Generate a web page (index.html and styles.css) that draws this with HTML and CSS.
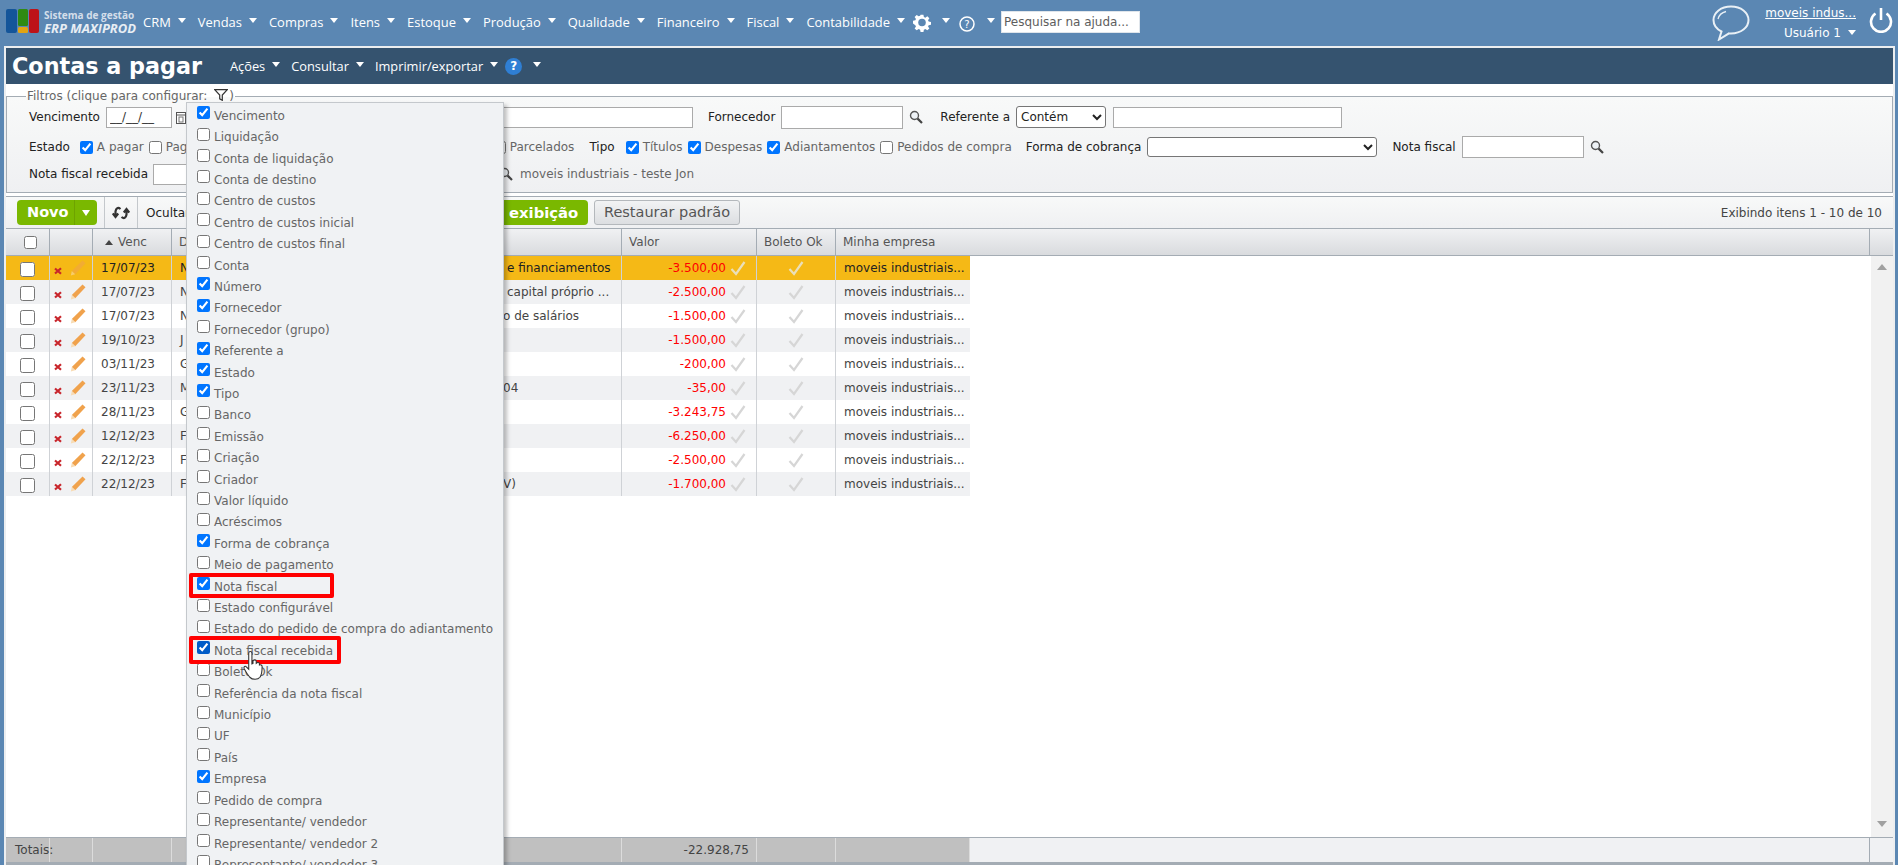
FILE: index.html
```html
<!DOCTYPE html>
<html lang="pt-BR">
<head>
<meta charset="utf-8">
<title>Contas a pagar</title>
<link rel="stylesheet" href="styles.css">
</head>
<body>
<svg class="defs" xmlns="http://www.w3.org/2000/svg">
  <symbol id="i-x" viewBox="0 0 8 8"><path d="M1 1.5 7 6.8M7 1.2 1 6.5" stroke="#c8252b" stroke-width="2.2" fill="none"/></symbol>
  <symbol id="i-pen" viewBox="0 0 16 16"><path d="M12.500 .6 15.500 3.200 5.200 14.200 1.800 11Z" fill="#f0a24c"/><path d="M1.800 11 5.200 14.200 .8 15.600Z" fill="#f8dcb4"/></symbol>
  <symbol id="i-chk" viewBox="0 0 16 16"><path d="M1.500 9 6 14 14.500 2" stroke="currentColor" stroke-width="2.200" fill="none"/></symbol>
  <symbol id="i-mag" viewBox="0 0 14 14"><circle cx="5.500" cy="5.500" r="4" fill="#eef2f6" stroke="#555" stroke-width="1.400"/><path d="M8.600 8.600 13 13" stroke="#444" stroke-width="2.200"/></symbol>
</svg>

<header class="topbar">
  <div class="logo">
    <svg class="logo-mark" viewBox="0 0 34 24" xmlns="http://www.w3.org/2000/svg">
      <rect x="0" y="0" width="11" height="24" rx="2" fill="#14559a"/>
      <rect x="12" y="0" width="10" height="17" rx="1.500" fill="#2f8a12"/>
      <rect x="12" y="18" width="10" height="6" rx="1.500" fill="#e3a412"/>
      <rect x="23" y="0" width="10" height="24" rx="2" fill="#bd1218"/>
    </svg>
    <div class="logo-text">
      <span class="logo-top">Sistema de gestão</span>
      <span class="logo-bottom">ERP MAXIPROD</span>
    </div>
  </div>
  <nav class="mainnav">
    <a class="navitem">CRM<i class="caret"></i></a>
    <a class="navitem">Vendas<i class="caret"></i></a>
    <a class="navitem">Compras<i class="caret"></i></a>
    <a class="navitem">Itens<i class="caret"></i></a>
    <a class="navitem">Estoque<i class="caret"></i></a>
    <a class="navitem">Produção<i class="caret"></i></a>
    <a class="navitem">Qualidade<i class="caret"></i></a>
    <a class="navitem">Financeiro<i class="caret"></i></a>
    <a class="navitem">Fiscal<i class="caret"></i></a>
    <a class="navitem navitem-last">Contabilidade<i class="caret"></i></a>
    <svg class="gear" viewBox="0 0 20 20" xmlns="http://www.w3.org/2000/svg"><path d="M8.400 1h3.200l.5 2.600 1.600.7 2.200-1.500 2.300 2.300-1.500 2.200.7 1.600 2.600.5v3.200l-2.600.5-.7 1.600 1.500 2.200-2.300 2.300-2.200-1.500-1.600.7-.5 2.600H8.400l-.5-2.600-1.600-.7-2.200 1.500-2.300-2.300 1.500-2.200-.7-1.600L0 11.100V7.900l2.600-.5.7-1.600-1.500-2.200 2.300-2.300 2.200 1.500 1.600-.7Z" transform="translate(0 .5) scale(1 .95)" fill="#fff"/><circle cx="10" cy="10" r="4.200" fill="#5b87b3"/></svg>
    <i class="caret caret-gear"></i>
    <svg class="helpi" viewBox="0 0 16 16" xmlns="http://www.w3.org/2000/svg"><circle cx="8" cy="8" r="7" fill="none" stroke="#fff" stroke-width="1.500"/><text x="8" y="11.600" text-anchor="middle" class="helpi-t">?</text></svg>
    <i class="caret caret-help"></i>
    <input class="helpsearch" type="text" placeholder="Pesquisar na ajuda...">
  </nav>
  <div class="userbox">
    <svg class="bubble" viewBox="0 0 38 36" xmlns="http://www.w3.org/2000/svg"><path d="M19 1.500C9 1.500 1.500 7.500 1.500 15c0 5 3 9 8 11.500L7 34.500 17 28.400c1 .1 1.500.1 2 .1 10 0 17.500-6 17.500-13.500S29 1.500 19 1.500Z" fill="none" stroke="#e9f0f6" stroke-width="2"/><path d="M6 14c1-4 4-6.500 8-7.500" fill="none" stroke="#e9f0f6" stroke-width="1.300"/></svg>
    <div class="usertext">
      <a class="company">moveis indus...</a>
      <span class="username">Usuário 1<i class="caret caret-user"></i></span>
    </div>
    <svg class="power" viewBox="0 0 24 26" xmlns="http://www.w3.org/2000/svg"><path d="M6.500 6.500a10 10 0 1 0 11 0" fill="none" stroke="#fff" stroke-width="2.600"/><path d="M12 1v12" stroke="#fff" stroke-width="2.600"/></svg>
  </div>
</header>

<main class="panel">
  <div class="titlebar">
    <h1 class="pagetitle">Contas a pagar</h1>
    <a class="subitem">Ações<i class="caret"></i></a>
    <a class="subitem">Consultar<i class="caret"></i></a>
    <a class="subitem subitem-tight">Imprimir/exportar<i class="caret"></i></a>
    <span class="bluehelp">?</span>
    <i class="caret caret-sub"></i>
  </div>

  <fieldset class="filters">
    <legend class="filters-legend">Filtros (clique para configurar:
      <svg class="funnel" viewBox="0 0 14 12" xmlns="http://www.w3.org/2000/svg"><path d="M.7.7h12.600L8.300 6v5.300L5.700 9.800V6Z" fill="none" stroke="#333" stroke-width="1.200"/></svg>)
    </legend>
    <div class="frow frow1">
      <label class="flabel">Vencimento</label>
      <input class="ftext f-date" type="text" value="__/__/__">
      <svg class="calendar" viewBox="0 0 10 13" xmlns="http://www.w3.org/2000/svg"><rect x=".5" y="1.500" width="9" height="11" fill="#fff" stroke="#555"/><path d="M1 4h8" stroke="#555"/><rect x="3" y="6" width="4" height="5" fill="none" stroke="#777"/></svg>
      <input class="ftext f-num" type="text">
      <label class="flabel f-forn">Fornecedor</label>
      <input class="ftext f-fornin" type="text">
      <svg class="mag"><use href="#i-mag"/></svg>
      <label class="flabel f-ref">Referente a</label>
      <select class="fselect f-cont"><option>Contém</option></select>
      <input class="ftext f-reftxt" type="text">
    </div>
    <div class="frow frow2">
      <label class="flabel">Estado</label>
      <input class="fchk f-c1" type="checkbox" checked><span class="clabel">A pagar</span>
      <input class="fchk f-c2" type="checkbox"><span class="clabel f-pag">Pagos</span>
      <input class="fchk f-c3" type="checkbox"><span class="clabel">Parcelados</span>
      <label class="flabel f-tipo">Tipo</label>
      <input class="fchk f-c4" type="checkbox" checked><span class="clabel">Títulos</span>
      <input class="fchk f-c5" type="checkbox" checked><span class="clabel">Despesas</span>
      <input class="fchk f-c5" type="checkbox" checked><span class="clabel">Adiantamentos</span>
      <input class="fchk f-c5" type="checkbox"><span class="clabel">Pedidos de compra</span>
      <label class="flabel f-forma">Forma de cobrança</label>
      <select class="fselect f-formasel"><option></option></select>
      <label class="flabel f-nf">Nota fiscal</label>
      <input class="ftext f-nfin" type="text">
      <svg class="mag"><use href="#i-mag"/></svg>
    </div>
    <div class="frow frow3">
      <label class="flabel">Nota fiscal recebida</label>
      <input class="ftext f-nfr" type="text">
      <svg class="mag f-mag3"><use href="#i-mag"/></svg>
      <span class="clabel f-emp">moveis industriais - teste Jon</span>
    </div>
  </fieldset>

  <div class="toolbar">
    <div class="btn-novo"><span class="novo-main">Novo</span><span class="novo-arrow"></span></div>
    <span class="tool-sync">
      <svg class="sync" viewBox="0 0 18 16" xmlns="http://www.w3.org/2000/svg"><path d="M8.500 4C6 2 4 3 3.500 6.500V11M.8 8.500 3.500 12 6.200 8.500" fill="none" stroke="#333" stroke-width="2.200"/><path d="M9.500 12c2.500 2 4.500 1 5-2.500V5M11.800 7.500 14.500 4 17.200 7.500" fill="none" stroke="#333" stroke-width="2.200"/></svg>
    </span>
    <span class="tool-hide">Ocultar</span>
    <div class="btn-green">exibição</div>
    <div class="btn-gray">Restaurar padrão</div>
    <span class="pager">Exibindo itens 1 - 10 de 10</span>
  </div>

  <div class="gridhead">
    <table class="gtable gtable-full">
      <colgroup><col class="c1"><col class="c2"><col class="c3"><col class="c4"><col class="c5"><col class="c6"><col class="c7"><col class="c8w"><col class="c10"></colgroup>
      <tr>
        <th><input class="hchk" type="checkbox"></th>
        <th></th>
        <th><i class="sortup"></i>Venc</th>
        <th>D</th>
        <th></th>
        <th>Valor</th>
        <th>Boleto Ok</th>
        <th>Minha empresa</th>
        <th></th>
      </tr>
    </table>
  </div>

  <div class="gridbody">
    <table class="gtable gtable-rows">
      <colgroup><col class="c1"><col class="c2"><col class="c3"><col class="c4"><col class="c5"><col class="c6"><col class="c7"><col class="c8"></colgroup>
      <tr class="sel"><td><input class="rchk" type="checkbox"></td><td class="acts"><svg class="ix"><use href="#i-x"/></svg><svg class="ipen ipen-sel"><use href="#i-pen"/></svg></td><td>17/07/23</td><td>N</td><td class="rtext">e financiamentos</td><td class="val"><span>-3.500,00</span><svg class="ick"><use href="#i-chk"/></svg></td><td class="ok"><svg class="ick"><use href="#i-chk"/></svg></td><td>moveis industriais...</td></tr>
      <tr><td><input class="rchk" type="checkbox"></td><td class="acts"><svg class="ix"><use href="#i-x"/></svg><svg class="ipen"><use href="#i-pen"/></svg></td><td>17/07/23</td><td>N</td><td class="rtext">capital próprio ...</td><td class="val"><span>-2.500,00</span><svg class="ick"><use href="#i-chk"/></svg></td><td class="ok"><svg class="ick"><use href="#i-chk"/></svg></td><td>moveis industriais...</td></tr>
      <tr><td><input class="rchk" type="checkbox"></td><td class="acts"><svg class="ix"><use href="#i-x"/></svg><svg class="ipen"><use href="#i-pen"/></svg></td><td>17/07/23</td><td>N</td><td class="rtext rtext-tight">o de salários</td><td class="val"><span>-1.500,00</span><svg class="ick"><use href="#i-chk"/></svg></td><td class="ok"><svg class="ick"><use href="#i-chk"/></svg></td><td>moveis industriais...</td></tr>
      <tr><td><input class="rchk" type="checkbox"></td><td class="acts"><svg class="ix"><use href="#i-x"/></svg><svg class="ipen"><use href="#i-pen"/></svg></td><td>19/10/23</td><td>J</td><td class="rtext"></td><td class="val"><span>-1.500,00</span><svg class="ick"><use href="#i-chk"/></svg></td><td class="ok"><svg class="ick"><use href="#i-chk"/></svg></td><td>moveis industriais...</td></tr>
      <tr><td><input class="rchk" type="checkbox"></td><td class="acts"><svg class="ix"><use href="#i-x"/></svg><svg class="ipen"><use href="#i-pen"/></svg></td><td>03/11/23</td><td>G</td><td class="rtext"></td><td class="val"><span>-200,00</span><svg class="ick"><use href="#i-chk"/></svg></td><td class="ok"><svg class="ick"><use href="#i-chk"/></svg></td><td>moveis industriais...</td></tr>
      <tr><td><input class="rchk" type="checkbox"></td><td class="acts"><svg class="ix"><use href="#i-x"/></svg><svg class="ipen"><use href="#i-pen"/></svg></td><td>23/11/23</td><td>M</td><td class="rtext rtext-tight">04</td><td class="val"><span>-35,00</span><svg class="ick"><use href="#i-chk"/></svg></td><td class="ok"><svg class="ick"><use href="#i-chk"/></svg></td><td>moveis industriais...</td></tr>
      <tr><td><input class="rchk" type="checkbox"></td><td class="acts"><svg class="ix"><use href="#i-x"/></svg><svg class="ipen"><use href="#i-pen"/></svg></td><td>28/11/23</td><td>G</td><td class="rtext"></td><td class="val"><span>-3.243,75</span><svg class="ick"><use href="#i-chk"/></svg></td><td class="ok"><svg class="ick"><use href="#i-chk"/></svg></td><td>moveis industriais...</td></tr>
      <tr><td><input class="rchk" type="checkbox"></td><td class="acts"><svg class="ix"><use href="#i-x"/></svg><svg class="ipen"><use href="#i-pen"/></svg></td><td>12/12/23</td><td>F</td><td class="rtext"></td><td class="val"><span>-6.250,00</span><svg class="ick"><use href="#i-chk"/></svg></td><td class="ok"><svg class="ick"><use href="#i-chk"/></svg></td><td>moveis industriais...</td></tr>
      <tr><td><input class="rchk" type="checkbox"></td><td class="acts"><svg class="ix"><use href="#i-x"/></svg><svg class="ipen"><use href="#i-pen"/></svg></td><td>22/12/23</td><td>F</td><td class="rtext"></td><td class="val"><span>-2.500,00</span><svg class="ick"><use href="#i-chk"/></svg></td><td class="ok"><svg class="ick"><use href="#i-chk"/></svg></td><td>moveis industriais...</td></tr>
      <tr><td><input class="rchk" type="checkbox"></td><td class="acts"><svg class="ix"><use href="#i-x"/></svg><svg class="ipen"><use href="#i-pen"/></svg></td><td>22/12/23</td><td>F</td><td class="rtext rtext-tight">V)</td><td class="val"><span>-1.700,00</span><svg class="ick"><use href="#i-chk"/></svg></td><td class="ok"><svg class="ick"><use href="#i-chk"/></svg></td><td>moveis industriais...</td></tr>
    </table>
    <div class="vscroll"><i class="sc-up"></i><i class="sc-down"></i></div>
  </div>

  <div class="gridfoot">
    <table class="gtable gtable-full">
      <colgroup><col class="c1"><col class="c2"><col class="c3"><col class="c4"><col class="c5"><col class="c6"><col class="c7"><col class="c8"><col class="c9"><col class="c10"></colgroup>
      <tr>
        <td class="tl tfirst">Totais:</td><td class="tl"></td><td class="tl"></td><td class="tl"></td><td class="tl"></td><td class="tl tv">-22.928,75</td><td class="tl"></td><td class="tl"></td><td class="te"></td><td class="te"></td>
      </tr>
    </table>
  </div>
</main>

<div class="colmenu">
  <label class="ci"><input type="checkbox" checked>Vencimento</label>
  <label class="ci"><input type="checkbox">Liquidação</label>
  <label class="ci"><input type="checkbox">Conta de liquidação</label>
  <label class="ci"><input type="checkbox">Conta de destino</label>
  <label class="ci"><input type="checkbox">Centro de custos</label>
  <label class="ci"><input type="checkbox">Centro de custos inicial</label>
  <label class="ci"><input type="checkbox">Centro de custos final</label>
  <label class="ci"><input type="checkbox">Conta</label>
  <label class="ci"><input type="checkbox" checked>Número</label>
  <label class="ci"><input type="checkbox" checked>Fornecedor</label>
  <label class="ci"><input type="checkbox">Fornecedor (grupo)</label>
  <label class="ci"><input type="checkbox" checked>Referente a</label>
  <label class="ci"><input type="checkbox" checked>Estado</label>
  <label class="ci"><input type="checkbox" checked>Tipo</label>
  <label class="ci"><input type="checkbox">Banco</label>
  <label class="ci"><input type="checkbox">Emissão</label>
  <label class="ci"><input type="checkbox">Criação</label>
  <label class="ci"><input type="checkbox">Criador</label>
  <label class="ci"><input type="checkbox">Valor líquido</label>
  <label class="ci"><input type="checkbox">Acréscimos</label>
  <label class="ci"><input type="checkbox" checked>Forma de cobrança</label>
  <label class="ci"><input type="checkbox">Meio de pagamento</label>
  <label class="ci"><input type="checkbox" checked>Nota fiscal</label>
  <label class="ci"><input type="checkbox">Estado configurável</label>
  <label class="ci"><input type="checkbox">Estado do pedido de compra do adiantamento</label>
  <label class="ci"><input class="hovered" type="checkbox" checked>Nota fiscal recebida</label>
  <label class="ci"><input type="checkbox">Boleto Ok</label>
  <label class="ci"><input type="checkbox">Referência da nota fiscal</label>
  <label class="ci"><input type="checkbox">Município</label>
  <label class="ci"><input type="checkbox">UF</label>
  <label class="ci"><input type="checkbox">País</label>
  <label class="ci"><input type="checkbox" checked>Empresa</label>
  <label class="ci"><input type="checkbox">Pedido de compra</label>
  <label class="ci"><input type="checkbox">Representante/ vendedor</label>
  <label class="ci"><input type="checkbox">Representante/ vendedor 2</label>
  <label class="ci"><input type="checkbox">Representante/ vendedor 3</label>
</div>

<div class="mark mark-nf"></div>
<div class="mark mark-nfr"></div>
<svg class="hand" viewBox="0 0 18 28" xmlns="http://www.w3.org/2000/svg"><path d="M5 2c0-2 3-2 3 0v10l1-.5V9c1-1 3-1 3 .5v2c1-1 3-1 3 .5v1c1-.5 2.500 0 2.500 1.500 0 5-.5 8-2 10-2 2.500-7 2.500-9.500 0C4 22 2 19 .8 16.500c-.8-2 1-3 2.200-1.500L5 17Z" fill="#fff" stroke="#333" stroke-width="1"/></svg>
</body>
</html>
```
FILE: styles.css
```css
* { box-sizing: border-box; }
html, body { height: 100%; }
body {
  margin: 0;
  height: 865px;
  overflow: hidden;
  background: #5b87b3;
  font-family: "DejaVu Sans", Verdana, sans-serif;
  font-size: 12px;
  color: #444;
  display: flex;
  flex-direction: column;
}
.defs { display: none; }

/* top bar */
.topbar { height: 46px; display: flex; align-items: flex-start; flex: none; color: #fff; }
.logo { display: flex; margin: 9px 0 0 6px; width: 137px; flex: none; }
.logo-mark { width: 34px; height: 24px; flex: none; }
.logo-text { display: flex; flex-direction: column; margin-left: 4px; }
.logo-top { font-size: 10px; line-height: 12px; font-weight: bold; color: #d4deea; font-family: "Open Sans", sans-serif; white-space: nowrap; }
.logo-bottom { font-size: 13px; line-height: 15px; font-weight: bold; font-style: italic; color: #e8eef4; font-family: "Open Sans", sans-serif; white-space: nowrap; }
.mainnav { display: flex; align-items: center; height: 44px; }
.navitem { display: flex; align-items: center; margin-right: 12px; font-family: "Open Sans", sans-serif; font-size: 12.950px; color: #fff; white-space: nowrap; }
.navitem-last { margin-right: 0; }
.caret { display: inline-block; width: 0; height: 0; border-left: 4.500px solid transparent; border-right: 4.500px solid transparent; border-top: 5px solid #fff; margin-left: 7px; flex: none; position: relative; top: -2px; }
.gear { width: 18px; height: 19px; margin-left: 8px; flex: none; }
.caret-gear { margin-left: 11px; }
.helpi { width: 16px; height: 16px; margin-left: 9px; margin-top: 3px; flex: none; }
.helpi-t { font-size: 10px; fill: #fff; font-family: "DejaVu Sans", sans-serif; }
.caret-help { margin-left: 12px; }
.helpsearch { width: 139px; height: 22px; margin-left: 6px; border: 1px solid #dfe5eb; padding: 0 2px; font-family: "DejaVu Sans", sans-serif; font-size: 12px; color: #555; background: #fff; outline: none; }
.helpsearch::placeholder { color: #5d5d5d; opacity: 1; }
.userbox { margin-left: auto; display: flex; align-items: flex-start; padding-right: 5px; }
.bubble { width: 38px; height: 36px; margin-top: 5px; }
.usertext { display: flex; flex-direction: column; align-items: flex-end; width: 92px; margin-left: 14px; margin-top: 5px; }
.company { color: #fff; text-decoration: underline; line-height: 16px; font-size: 12px; white-space: nowrap; }
.username { line-height: 16px; margin-top: 4px; white-space: nowrap; font-size: 12px; }
.caret-user { margin-left: 7px; }
.power { width: 24px; height: 26px; margin: 7px 0 0 13px; }

/* main panel */
.panel { flex: 1; min-height: 0; margin: 0 3px 0 4px; border: 2px solid #eceef0; border-bottom: 0; background: #fff; display: flex; flex-direction: column; }
.titlebar { height: 36px; flex: none; background: #35536f; display: flex; align-items: center; padding-left: 6px; color: #fff; }
.pagetitle { margin: 0 28px 0 0; width: 190px; font-size: 22.300px; line-height: 36px; font-weight: bold; white-space: nowrap; }
.subitem { display: flex; align-items: center; margin-right: 11px; font-family: "Open Sans", sans-serif; font-size: 12.800px; white-space: nowrap; }
.subitem-tight { margin-right: 7px; }
.bluehelp { width: 17px; height: 17px; border-radius: 50%; background: #2f7fd4; color: #fff; font-size: 12px; font-weight: bold; text-align: center; line-height: 17px; flex: none; }
.caret-sub { margin-left: 11px; }

/* filters */
.filters { margin: 4px 0 0; padding: 0 0 0 22px; height: 105px; flex: none; border: 1px solid #a4acb4; background: linear-gradient(#f8f9f9, #eff0f2); position: relative; min-width: 0; }
.filters-legend { margin-left: -3px; padding: 0 1px; font-size: 12px; line-height: 16px; height: 16px; color: #666; white-space: nowrap; }
.funnel { width: 14px; height: 12px; margin: 0 1px 0 3px; vertical-align: -1px; }
.frow { display: flex; align-items: center; white-space: nowrap; }
.frow1 { height: 24px; margin-top: 1px; }
.frow2 { height: 24px; margin-top: 6px; }
.frow3 { height: 24px; margin-top: 3px; }
.flabel { color: #222; font-size: 12px; }
.clabel { color: #666; font-size: 12px; }
.ftext { height: 21px; border: 1px solid #aaa; background: #fff; padding: 0 3px; font-family: "DejaVu Sans", sans-serif; font-size: 12px; color: #333; border-radius: 0; outline: none; }
.fselect { height: 22px; border: 1px solid #767676; border-radius: 3px; background: #fff; font-family: "DejaVu Sans", sans-serif; font-size: 12px; color: #222; }
.f-date { width: 66px; margin-left: 6px; }
.calendar { width: 10px; height: 13px; margin-left: 4px; flex: none; }
.f-num { width: 232px; margin-left: 275px; }
.f-forn { margin-left: 15px; }
.f-fornin { width: 122px; height: 23px; margin-left: 6px; }
.mag { width: 14px; height: 14px; margin-left: 6px; flex: none; }
.f-ref { margin-left: 17px; }
.f-cont { width: 90px; margin-left: 6px; }
.f-reftxt { width: 229px; margin-left: 7px; }
.fchk { width: 13px; height: 13px; margin: 0 4px 0 0; flex: none; accent-color: #0075ff; }
.f-c1 { margin-left: 10px; }
.f-c2 { margin-left: 5px; }
.f-pag { width: 40px; }
.f-c3 { margin-left: 287px; }
.f-tipo { margin-left: 15px; }
.f-c4 { margin-left: 11px; }
.f-c5 { margin-left: 5px; }
.f-forma { margin-left: 14px; }
.f-formasel { width: 230px; height: 20px; margin-left: 6px; }
.f-nf { margin-left: 15px; }
.f-nfin { width: 122px; height: 22px; margin-left: 6px; }
.f-nfr { width: 120px; margin-left: 5px; }
.f-mag3 { margin-left: 226px; }
.f-emp { margin-left: 7px; }

/* toolbar */
.toolbar { height: 32px; margin-top: 3px; flex: none; border-top: 1px solid #a4acb4; background: linear-gradient(#f8f9f9, #eff0f2); display: flex; align-items: center; padding-left: 11px; padding-right: 11px; white-space: nowrap; }
.btn-novo { width: 80px; height: 25px; background: #7ab800; border-radius: 4px; display: flex; align-items: center; color: #fff; font-weight: bold; font-size: 14.500px; }
.novo-main { width: 58px; padding-left: 10px; border-right: 1px solid #6ea300; line-height: 25px; }
.novo-arrow { width: 0; height: 0; margin-left: 7px; border-left: 4px solid transparent; border-right: 4px solid transparent; border-top: 6px solid #fff; }
.tool-sync { width: 34px; height: 31px; margin-left: 7px; border-left: 1px solid #c4c8cc; border-right: 1px solid #c4c8cc; display: flex; align-items: center; justify-content: center; flex: none; }
.sync { width: 18px; height: 16px; }
.tool-hide { margin-left: 8px; color: #222; width: 60px; }
.btn-green { width: 100px; margin-left: 282px; height: 25px; line-height: 25px; background: #7ab800; border-radius: 4px; color: #fff; font-weight: bold; font-size: 14.800px; padding-left: 21px; flex: none; }
.btn-gray { width: 146px; height: 25px; margin-left: 6px; line-height: 23px; border: 1px solid #b4b8bc; border-radius: 3px; background: linear-gradient(#f2f3f4, #dcdee1); color: #555; font-size: 14.500px; text-align: center; flex: none; }
.pager { margin-left: auto; color: #444; }

/* grid */
.gridhead { height: 28px; flex: none; border-top: 1px solid #a4acb4; border-bottom: 1px solid #a4acb4; background: linear-gradient(#f0f1f3, #d9dbde); }
.gtable { border-collapse: separate; border-spacing: 0; table-layout: fixed; }
.gtable-full { width: 1887px; }
.gtable-rows { width: 964px; flex: none; align-self: flex-start; }
.c1 { width: 44px; }
.c2 { width: 43px; }
.c3 { width: 79px; }
.c4 { width: 328px; }
.c5 { width: 122px; }
.c6 { width: 135px; }
.c7 { width: 79px; }
.c8 { width: 134px; }
.c8w { width: 1034px; }
.c9 { width: 900px; }
.c10 { width: 23px; }
th { height: 26px; padding: 0 0 0 7px; border-right: 1px solid #a4acb4; text-align: left; font-weight: normal; color: #555; font-size: 12px; white-space: nowrap; overflow: hidden; }
th:nth-child(1) { text-align: center; padding: 0; }
th:last-child { border-right: 0; }
.hchk { width: 13px; height: 13px; margin: 3px 0 0 6px; }
.sortup { display: inline-block; width: 0; height: 0; border-left: 4.500px solid transparent; border-right: 4.500px solid transparent; border-bottom: 5px solid #444; margin: 0 5px 1px 5px; }
.gridbody { flex: 1; min-height: 0; display: flex; background: #fff; }
.gtable-rows td { height: 24px; padding: 0 0 0 8px; border-right: 1px solid #cfd2d6; color: #444; white-space: nowrap; overflow: hidden; }
.gtable-rows td:last-child { border-right: 0; padding-left: 8px; }
.gtable-rows tr:nth-child(even) td { background: #f0f1f3; }
.gtable-rows tr.sel td { background: #f5b916; color: #222; }
.gtable-rows td:first-child { padding: 0 0 0 14px; }
.rchk { width: 15px; height: 15px; margin: 3px 0 0 0; display: block; }
.gtable-rows td.acts { padding: 0; }
.acts svg { vertical-align: middle; }
.ix { width: 8px; height: 8px; margin: 5px 8px 0 4px; }
.ipen { width: 16px; height: 16px; }
.ipen-sel { opacity: .55; }
.gtable-rows td.rtext { padding-left: 7px; border-right: 1px solid #cfd2d6; }
.gtable-rows td.rtext-tight { padding-left: 3px; }
.gtable-rows td.val, .gtable-rows tr.sel td.val { padding: 0; text-align: right; color: #f00; border-right: 1px solid #cfd2d6; }
.val span { vertical-align: middle; }
.ick { width: 16px; height: 16px; color: #d6d6d6; vertical-align: middle; margin: 0 10px 0 4px; }
.sel .ick { color: #eadfba; }
.gtable-rows td.ok { padding: 0; text-align: center; }
.ok .ick { margin: 0; }
.vscroll { margin-left: auto; width: 22px; background: #f1f1f1; position: relative; flex: none; }
.sc-up, .sc-down { position: absolute; left: 6px; width: 0; height: 0; border-left: 5px solid transparent; border-right: 5px solid transparent; }
.sc-up { top: 8px; border-bottom: 6px solid #a0a0a0; }
.sc-down { bottom: 10px; border-top: 6px solid #a0a0a0; }
.gridfoot { height: 28px; flex: none; border-top: 1px solid #a4acb4; border-bottom: 3px solid #a4acb4; }
.gridfoot td { height: 24px; padding: 0; white-space: nowrap; }
.tl { background: #c0c0c0; border-right: 1px solid #dcdcdc; color: #444; padding-left: 9px !important; }
.tv { text-align: right; padding-right: 7px !important; }
.te { background: #f0f1f3; border-right: 1px solid #a4acb4; }
.te:last-child { border-right: 0; }

/* overlay: column menu */
.colmenu { position: absolute; left: 186px; top: 102px; width: 318px; height: 763px; overflow: hidden; background: #f0f2f4; border: 1px solid #c4c8cc; border-bottom: 0; box-shadow: 3px 3px 4px rgba(0,0,0,.25); padding: 2px 0 0 10px; }
.ci { display: flex; align-items: center; height: 21.420px; color: #666; font-size: 12px; white-space: nowrap; }
.ci input { width: 13px; height: 13px; margin: 0 4px 6px 0; flex: none; accent-color: #0075ff; }
.ci input.hovered { accent-color: #005cc8; }
.mark { position: absolute; border: 4px solid #f00; border-radius: 2px; pointer-events: none; }
.mark-nf { left: 189px; top: 573px; width: 145px; height: 25px; }
.mark-nfr { left: 189px; top: 636px; width: 152px; height: 28px; }
.hand { position: absolute; left: 243px; top: 651px; width: 20px; height: 30px; }
```
